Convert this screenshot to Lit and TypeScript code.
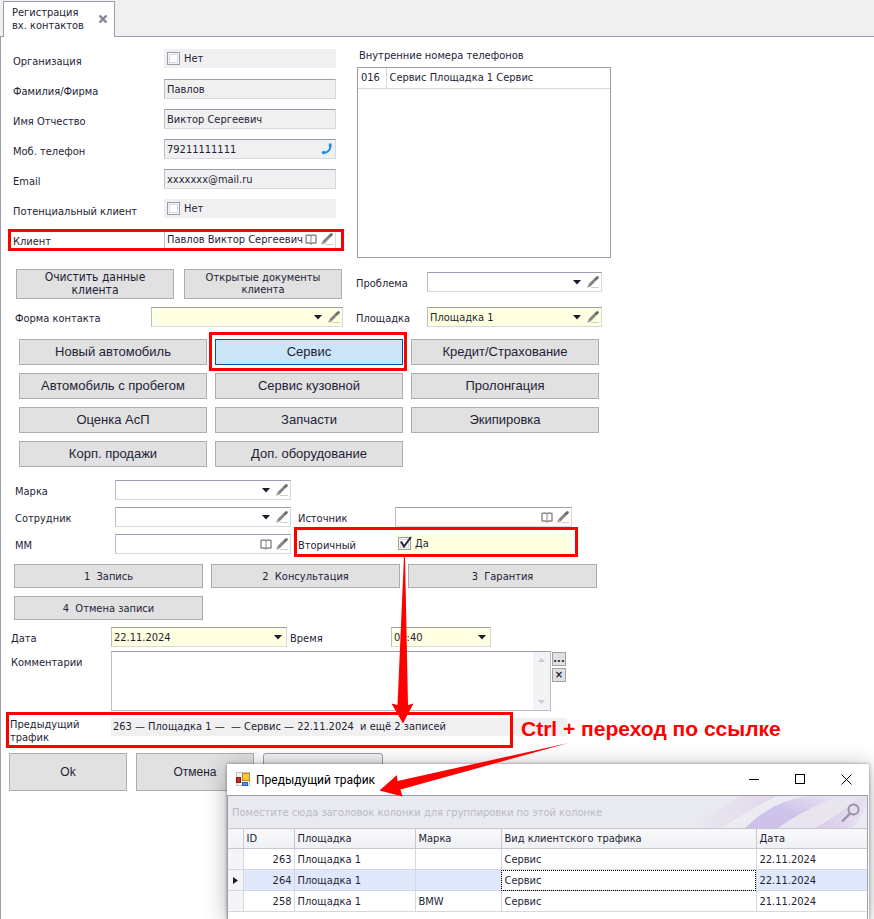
import { LitElement, html, css, svg, nothing } from "lit";
import { customElement, state } from "lit/decorators.js";
import { classMap } from "lit/directives/class-map.js";

interface TrafficRow {
  id: number;
  site: string;
  brand: string;
  kind: string;
  date: string;
}

const SERVICES = [
  "Новый автомобиль",
  "Сервис",
  "Кредит/Страхование",
  "Автомобиль с пробегом",
  "Сервис кузовной",
  "Пролонгация",
  "Оценка АсП",
  "Запчасти",
  "Экипировка",
  "Корп. продажи",
  "Доп. оборудование",
];

const ACTIONS = ["1  Запись", "2  Консультация", "3  Гарантия", "4  Отмена записи"];

const TRAFFIC: TrafficRow[] = [
  { id: 263, site: "Площадка 1", brand: "", kind: "Сервис", date: "22.11.2024" },
  { id: 264, site: "Площадка 1", brand: "", kind: "Сервис", date: "22.11.2024" },
  { id: 258, site: "Площадка 1", brand: "BMW", kind: "Сервис", date: "21.11.2024" },
];

const caret = html`<svg class="caret" width="8" height="5" viewBox="0 0 8 5" aria-hidden="true">
  <path d="M0 0H8L4 4.5Z" fill="#1a1a2e" />
</svg>`;

const pencil = html`<svg width="12" height="12" viewBox="0 0 12 12" aria-hidden="true">
  <path d="M4 11.5H12" stroke="#d0d0d0" stroke-width="1" />
  <path d="M2.4 9.4L9 2.8" stroke="#868686" stroke-width="3" />
  <path d="M9.2 2.6L10.4 1.5" stroke="#6c6c6c" stroke-width="2.8" stroke-linecap="round" />
  <path d="M0.2 11.8L1.2 8.4L3.6 10.6Z" fill="#9a9a9a" />
</svg>`;

const book = html`<svg width="12" height="11" viewBox="0 0 12 11" aria-hidden="true">
  <path
    d="M1 1.5Q4.8 0.5 6 1.8Q7.2 0.5 11 1.5V9H7.2L6 10L4.8 9H1Z"
    fill="#fff"
    stroke="#8a8a8a"
    stroke-width="1.4"
    stroke-linejoin="round"
  />
  <path d="M6 2V9" stroke="#8a8a8a" stroke-width="1" />
</svg>`;

const phone = html`<svg width="12" height="12" viewBox="0 0 12 12" aria-hidden="true">
  <path
    d="M8 0.9Q8 0.2 8.8 0.3L10.4 0.8Q11.3 4.6 8.6 7.9Q6 11 2 11.4L0.6 9.6Q0.4 9 1 8.7L3 7.8Q3.6 7.6 4 8.2L4.5 8.8Q7.6 7.4 8.6 4.3L8.1 3.9Q7.6 3.5 7.7 2.9Z"
    fill="#1490e6"
  />
</svg>`;

@customElement("app-root")
export class AppRoot extends LitElement {
  @state() private service = "Сервис";
  @state() private current = 264;

  static styles = css`
    :host {
      display: block;
      color: #1e1e36;
      font: 11px/13px "DejaVu Sans Condensed", "Noto Sans", sans-serif;
    }
    * {
      box-sizing: border-box;
    }
    button,
    input,
    select,
    textarea {
      font: inherit;
      color: inherit;
      margin: 0;
      min-width: 0;
    }
    .page {
      position: relative;
      display: flex;
      flex-direction: column;
      min-height: 100vh;
      background: #fff;
      overflow: hidden;
    }
    .tabs {
      display: flex;
      height: 37px;
      padding: 1px 0 0 3px;
      background: #f0f0f0;
      border-bottom: 1px solid #9c9dae;
    }
    .tab {
      display: flex;
      align-items: center;
      justify-content: space-between;
      width: 112px;
      height: 36px;
      padding: 0 6px 1px 8px;
      background: #fff;
      border: 1px solid #9c9dae;
      border-bottom: 0;
    }
    .tab-close {
      display: flex;
      padding: 0;
      border: 0;
      background: none;
    }
    .work {
      flex: 1;
      border-left: 1px solid #9c9dae;
    }
    .form {
      position: relative;
      max-width: 611px;
    }
    .client {
      display: grid;
      grid-template-columns: 323fr 254fr;
      gap: 21px;
      padding: 12px 1px 0 12px;
    }
    .rows {
      display: flex;
      flex-direction: column;
      gap: 10px;
    }
    .row {
      position: relative;
      display: grid;
      grid-template-columns: 100px 1fr;
      height: 20px;
    }
    .rows .row {
      grid-template-columns: 151px 1fr;
    }
    .label {
      padding-top: 5px;
      line-height: 14px;
      white-space: nowrap;
    }
    .rows .label {
      padding-top: 6px;
    }
    .box {
      display: flex;
      align-items: center;
      min-width: 0;
      height: 20px;
      background: #fff;
      border: 1px solid #d6d8e0;
      border-top-color: #9c9dae;
      border-left-color: #bcbdca;
    }
    .grey {
      background: #f0f0f0;
    }
    .yellow {
      background: #ffffe1;
    }
    .plain {
      height: 19px;
      border-color: transparent;
    }
    .box input[type="text"],
    .box select {
      flex: 1;
      width: 100%;
      height: 18px;
      padding: 0 0 0 2px;
      border: 0;
      outline: 0;
      background: transparent;
      appearance: none;
    }
    .caret {
      flex: none;
      margin-right: 4px;
    }
    .icon {
      display: flex;
      flex: none;
      align-items: center;
      justify-content: center;
      width: 16px;
      height: 16px;
      padding: 0;
      border: 0;
      background: none;
    }
    .check {
      display: flex;
      align-items: center;
      gap: 4px;
      padding-left: 2px;
    }
    .check input {
      appearance: none;
      width: 13px;
      height: 13px;
      border: 1px solid #9c9dae;
      background: #fff;
      box-shadow: inset 0 0 0 1px #f4f4f8, inset 0 0 0 2px #d8dae4;
    }
    .tick {
      position: relative;
      display: flex;
    }
    .tick svg {
      position: absolute;
      left: 1px;
      top: -1px;
      pointer-events: none;
    }
    .marked::after {
      content: "";
      position: absolute;
      border: 3px solid #f00;
      pointer-events: none;
      z-index: 2;
    }
    .mark-client::after {
      inset: 0 -8px -2px -5px;
    }
    .mark-service::after {
      inset: -7px -4px -6px -6px;
    }
    .mark-second::after {
      inset: -7px -6px -3px -4px;
    }
    .mark-traffic::after {
      inset: -6px 54px -4px -5px;
    }
    .phones {
      display: flex;
      flex-direction: column;
      gap: 5px;
    }
    .phones-title {
      padding-left: 2px;
      white-space: nowrap;
    }
    .list {
      height: 191px;
      border: 1px solid #9c9dae;
    }
    .list table {
      width: 100%;
      border-collapse: collapse;
    }
    .list td {
      height: 20px;
      padding: 0 3px;
      border-bottom: 1px solid #d6d8e0;
    }
    .list td:first-child {
      width: 28px;
      border-right: 1px solid #d6d8e0;
    }
    .btn {
      padding: 0;
      border: 1px solid #adadad;
      background: #e1e1e1;
      white-space: pre;
    }
    .contact {
      display: grid;
      grid-template-columns: 328fr 246fr;
      gap: 13px;
      padding: 11px 10px 0 14px;
    }
    .stack {
      display: flex;
      flex-direction: column;
      gap: 8px;
    }
    .stack .row {
      grid-template-columns: 136px 1fr;
    }
    .stack.side {
      gap: 15px;
      padding-top: 3px;
    }
    .stack.side .row {
      grid-template-columns: 71px 1fr;
    }
    .pair {
      display: grid;
      grid-template-columns: 1fr 1fr;
      gap: 10px;
      height: 30px;
      padding: 0 1px;
    }
    .pair .btn {
      white-space: normal;
      padding: 0 20px;
      line-height: 12px;
    }
    .pair .big {
      font-size: 12px;
      line-height: 13px;
    }
    .services {
      display: grid;
      grid-template-columns: repeat(3, 1fr);
      gap: 8px;
      padding: 12px 13px 0 18px;
    }
    .cell {
      position: relative;
      display: grid;
    }
    .services .btn {
      height: 26px;
      font: 13px/16px "Liberation Sans", sans-serif;
    }
    .services .on {
      background: #cce4f7;
      border-color: #005499;
    }
    .refs {
      display: grid;
      grid-template-columns: 276fr 274fr;
      gap: 7px;
      padding: 13px 40px 0 14px;
    }
    .refs .row {
      grid-template-columns: 97px 1fr;
    }
    .refs .left {
      grid-column: 1;
      grid-template-columns: 100px 1fr;
    }
    .actions {
      display: grid;
      grid-template-columns: repeat(3, 1fr);
      gap: 8px;
      padding: 10px 15px 0 13px;
    }
    .actions .btn {
      height: 24px;
    }
    .when {
      display: grid;
      grid-template-columns: 100px 176fr 104px 100fr;
      padding: 7px 121px 0 10px;
    }
    .when .time-label {
      padding-left: 3px;
    }
    .notes {
      display: grid;
      grid-template-columns: 100px 1fr 14px;
      column-gap: 1px;
      padding: 4px 46px 0 9px;
    }
    .notes .label {
      padding-left: 1px;
    }
    .memo {
      display: flex;
      height: 60px;
      border: 1px solid #bcbdca;
      border-top-color: #9c9dae;
    }
    .memo textarea {
      flex: 1;
      padding: 2px;
      border: 0;
      outline: 0;
      resize: none;
      background: #fff;
    }
    .scroll {
      display: flex;
      flex-direction: column;
      justify-content: space-between;
      align-items: center;
      width: 17px;
      padding: 6px 0;
      background: #f3f3f6;
    }
    .minis {
      display: flex;
      flex-direction: column;
      gap: 2px;
      padding-top: 1px;
    }
    .minis .btn {
      height: 14px;
      font-weight: bold;
      line-height: 10px;
      border-color: #a0a0a0;
    }
    .traffic {
      position: relative;
      display: grid;
      grid-template-columns: 101px 1fr;
      margin: 7px 45px 0 9px;
    }
    .traffic.mark-traffic::after {
      left: -4px;
    }
    .traffic a {
      height: 18px;
      padding-left: 2px;
      color: inherit;
      line-height: 18px;
      background: #f0f0f0;
      text-decoration: none;
      white-space: pre;
    }
    .finish {
      display: grid;
      grid-template-columns: 118fr 118fr 120fr;
      gap: 9px;
      width: 374px;
      margin: 9px 0 0 8px;
    }
    .finish .btn {
      height: 38px;
      font: 12px/14px "Liberation Sans", sans-serif;
    }
    .finish .soft {
      border: 1px solid #9c9dae;
      border-radius: 3px;
      background: linear-gradient(#f4f4f6, #d4d5da);
    }
    .arrows {
      position: absolute;
      left: 0;
      top: 0;
      z-index: 4;
      overflow: visible;
      pointer-events: none;
    }
    .hint {
      position: absolute;
      left: 521px;
      top: 717px;
      z-index: 3;
      color: #f00;
      font: bold 21px/24px "Liberation Sans", sans-serif;
      white-space: nowrap;
    }
    .window {
      position: absolute;
      left: 227px;
      right: 5px;
      top: 764px;
      bottom: 0;
      z-index: 3;
      display: flex;
      flex-direction: column;
      background: #fff;
      box-shadow: 0 0 3px rgba(0, 0, 0, 0.4), 0 3px 22px rgba(0, 0, 0, 0.3);
    }
    .titlebar {
      display: flex;
      align-items: center;
      gap: 5px;
      height: 31px;
      padding-left: 9px;
      color: #000;
      font: 12px/16px Roboto, "Noto Sans", sans-serif;
    }
    .caption {
      flex: 1;
    }
    .win-btn {
      display: flex;
      align-items: center;
      justify-content: center;
      width: 46px;
      height: 30px;
      margin-left: -5px;
      padding: 0;
      border: 0;
      background: none;
    }
    .grid {
      flex: 1;
      margin-right: 1px;
      border: 1px solid #9c9dae;
      border-bottom: 0;
    }
    .group {
      display: flex;
      align-items: center;
      justify-content: space-between;
      position: relative;
      height: 32px;
      padding: 1px 7px 0 4px;
      color: #b9bac6;
      background: #e9eaef;
    }
    .group .waves {
      position: absolute;
      right: 0;
      top: 0;
    }
    .group .find {
      position: relative;
    }
    .data {
      width: 100%;
      border-collapse: collapse;
      table-layout: fixed;
    }
    .data th,
    .data td {
      height: 21px;
      padding: 0 3px;
      text-align: left;
      font-weight: normal;
      white-space: nowrap;
      border: 1px solid #d6d8e0;
      border-left: 0;
    }
    .data th {
      height: 20px;
      background: linear-gradient(#f9f9fb, #eff0f3);
      border-color: #c6c8d2;
    }
    .data tr > :last-child {
      border-right: 0;
    }
    .data td.num {
      text-align: right;
      padding-right: 2px;
    }
    .data td:first-child {
      background: #f5f5f8;
      padding: 0 0 0 5px;
    }
    .data .sel td {
      background: #e0e9fc;
    }
    .data .sel td:first-child {
      background: #f5f5f8;
    }
    .data .sel td.focus {
      background: #fff;
      outline: 1px dotted #000;
      outline-offset: -1px;
    }
    .c0 { width: 15px; }
    .c1 { width: 51px; }
    .c2 { width: 121px; }
    .c3 { width: 86px; }
    .c5 { width: 111px; }
  `;

  private check(id: string, text: string, on = false) {
    return html`<label class="check">
      <span class="tick">
        <input type="checkbox" id=${id} ?checked=${on} />
        ${on
          ? html`<svg width="13" height="13" viewBox="0 0 13 13" aria-hidden="true">
              <path d="M2 5.5L5 10.5L12 1" fill="none" stroke="#26263a" stroke-width="2" />
            </svg>`
          : nothing}
      </span>
      ${text}
    </label>`;
  }

  private text(id: string, label: string, value: string, icons: unknown = nothing) {
    return html`<div class="row">
      <label class="label" for=${id}>${label}</label>
      <div class="box grey"><input type="text" id=${id} .value=${value} readonly />${icons}</div>
    </div>`;
  }

  private edit() {
    return html`<button class="icon" aria-label="Изменить">${pencil}</button>`;
  }

  private open() {
    return html`<button class="icon" aria-label="Открыть">${book}</button>`;
  }

  private choice(id: string, label: string, value = "", yellow = false, extra = "") {
    return html`<div class="row ${extra}">
      <label class="label" for=${id}>${label}</label>
      <div class=${classMap({ box: true, yellow })}>
        <select id=${id}><option>${value}</option></select>
        ${caret}${this.edit()}
      </div>
    </div>`;
  }

  private lookup(id: string, label: string, value = "", extra = "") {
    return html`<div class="row ${extra}">
      <label class="label" for=${id}>${label}</label>
      <div class="box"><input type="text" id=${id} .value=${value} />${this.open()}${this.edit()}</div>
    </div>`;
  }

  private flag(id: string, label: string) {
    return html`<div class="row">
      <label class="label" for=${id}>${label}</label>
      <div class="box grey plain">${this.check(id, "Нет")}</div>
    </div>`;
  }

  private popup() {
    return html`<section class="window" role="dialog" aria-label="Предыдущий трафик">
      <header class="titlebar">
        <svg width="15" height="15" viewBox="0 0 15 15" aria-hidden="true">
          <rect x="0.5" y="0.5" width="13" height="13" fill="#f4f4f4" stroke="#c4c4c4" />
          <rect x="0.5" y="5.5" width="4" height="5" fill="#c8281e" stroke="#8a1810" />
          <rect x="6.5" y="1.5" width="7" height="7" fill="#f8c83c" stroke="#c08a10" />
          <rect x="6.5" y="10.5" width="5" height="3" fill="#5a96ea" stroke="#2c5cc0" />
        </svg>
        <span class="caption">Предыдущий трафик</span>
        <button class="win-btn" aria-label="Свернуть">
          <svg width="11" height="11"><path d="M0 5.5H10" stroke="#000" /></svg>
        </button>
        <button class="win-btn" aria-label="Развернуть">
          <svg width="11" height="11"><rect x="0.5" y="0.5" width="9" height="9" fill="none" stroke="#000" /></svg>
        </button>
        <button class="win-btn" aria-label="Закрыть">
          <svg width="11" height="11"><path d="M0.5 0.5L10.5 10.5M10.5 0.5L0.5 10.5" stroke="#000" /></svg>
        </button>
      </header>
      <div class="grid">
        <div class="group">
          <svg class="waves" width="180" height="32" viewBox="0 0 180 32" aria-hidden="true">
            <defs>
              <linearGradient id="w1" x1="0" x2="1">
                <stop offset="0" stop-color="#e9eaef" />
                <stop offset="1" stop-color="#e4d6ec" />
              </linearGradient>
              <linearGradient id="w2" x1="0" y1="1" x2="1" y2="0">
                <stop offset="0" stop-color="#cdc0ea" />
                <stop offset="0.5" stop-color="#cfc3ea" />
                <stop offset="1" stop-color="#e9e6f1" />
              </linearGradient>
              <linearGradient id="w3" x1="0" x2="1">
                <stop offset="0" stop-color="#d8c8ea" />
                <stop offset="1" stop-color="#e8e2f1" />
              </linearGradient>
            </defs>
            <path d="M0 32Q32 12 54 0H92Q66 12 36 32Z" fill="url(#w1)" />
            <path d="M36 32Q66 12 92 0H122Q86 6 58 32Z" fill="#ecebf1" />
            <path d="M58 32Q86 4 122 0H152Q112 16 92 32Z" fill="url(#w2)" />
            <path d="M92 32Q112 16 152 0H172Q150 18 128 32Z" fill="#e8e5ef" />
            <path d="M128 32Q154 18 172 0H180V32Z" fill="url(#w3)" />
            <path d="M166 32Q174 22 180 8V32Z" fill="#ecebf1" />
            <path d="M36 32Q66 12 92 0" fill="none" stroke="#f3f1f6" />
          </svg>
          <span>Поместите сюда заголовок колонки для группировки по этой колонке</span>
          <svg class="find" width="19" height="20" viewBox="0 0 19 20" aria-hidden="true">
            <circle cx="12.5" cy="6.5" r="5" fill="none" stroke="#9495a5" stroke-width="2" />
            <path d="M9 10.5L1 18.5" stroke="#9495a5" stroke-width="2.4" />
          </svg>
        </div>
        <table class="data">
          <colgroup>
            <col class="c0" /><col class="c1" /><col class="c2" /><col class="c3" /><col /><col class="c5" />
          </colgroup>
          <thead>
            <tr>
              <th></th>
              <th>ID</th>
              <th>Площадка</th>
              <th>Марка</th>
              <th>Вид клиентского трафика</th>
              <th>Дата</th>
            </tr>
          </thead>
          <tbody>
            ${TRAFFIC.map((r) => {
              const sel = r.id === this.current;
              return html`<tr class=${classMap({ sel })} @click=${() => (this.current = r.id)}>
                <td>
                  ${sel
                    ? html`<svg width="5" height="7" viewBox="0 0 5 7"><path d="M0 0L5 3.5L0 7Z" fill="#1a1a2e" /></svg>`
                    : nothing}
                </td>
                <td class="num">${r.id}</td>
                <td>${r.site}</td>
                <td>${r.brand}</td>
                <td class=${classMap({ focus: sel })}>${r.kind}</td>
                <td>${r.date}</td>
              </tr>`;
            })}
          </tbody>
        </table>
      </div>
    </section>`;
  }

  render() {
    return html`<div class="page">
      <nav class="tabs">
        <div class="tab">
          <span>Регистрация<br />вх. контактов</span>
          <button class="tab-close" aria-label="Закрыть вкладку">
            <svg width="10" height="8" viewBox="0 0 10 8">
              <path d="M1.5 0.5L8.5 7.5M8.5 0.5L1.5 7.5" stroke="#858694" stroke-width="2.4" />
            </svg>
          </button>
        </div>
      </nav>

      <main class="work">
        <div class="form">
          <section class="client">
            <div class="rows">
              ${this.flag("org", "Организация")} ${this.text("surname", "Фамилия/Фирма", "Павлов")}
              ${this.text("name", "Имя Отчество", "Виктор Сергеевич")}
              ${this.text(
                "phone",
                "Моб. телефон",
                "79211111111",
                html`<button class="icon" aria-label="Позвонить">${phone}</button>`
              )}
              ${this.text("email", "Email", "xxxxxxx@mail.ru")} ${this.flag("lead", "Потенциальный клиент")}
              ${this.lookup("client", "Клиент", "Павлов Виктор Сергеевич", "marked mark-client")}
            </div>
            <div class="phones">
              <span class="phones-title">Внутренние номера телефонов</span>
              <div class="list">
                <table>
                  <tr>
                    <td>016</td>
                    <td>Сервис Площадка 1 Сервис</td>
                  </tr>
                </table>
              </div>
            </div>
          </section>

          <section class="contact">
            <div class="stack">
              <div class="pair">
                <button class="btn big">Очистить данные клиента</button>
                <button class="btn">Открытые документы клиента</button>
              </div>
              ${this.choice("form", "Форма контакта", "", true)}
            </div>
            <div class="stack side">
              ${this.choice("problem", "Проблема")} ${this.choice("site", "Площадка", "Площадка 1", true)}
            </div>
          </section>

          <section class="services">
            ${SERVICES.map((s) => {
              const on = s === this.service;
              return html`<div class=${classMap({ cell: true, marked: on, "mark-service": on })}>
                <button class=${classMap({ btn: true, on })} @click=${() => (this.service = s)}>${s}</button>
              </div>`;
            })}
          </section>

          <section class="refs">
            ${this.choice("brand", "Марка", "", false, "left")} ${this.choice("staff", "Сотрудник", "", false, "left")}
            ${this.lookup("source", "Источник")} ${this.lookup("mm", "ММ", "", "left")}
            <div class="row marked mark-second">
              <label class="label" for="second">Вторичный</label>
              <div class="box yellow plain">${this.check("second", "Да", true)}</div>
            </div>
          </section>

          <section class="actions">${ACTIONS.map((a) => html`<button class="btn">${a}</button>`)}</section>

          <section class="when">
            <label class="label" for="date">Дата</label>
            <div class="box yellow">
              <select id="date"><option>22.11.2024</option></select>${caret}
            </div>
            <label class="label time-label" for="time">Время</label>
            <div class="box yellow">
              <select id="time"><option>09:40</option></select>${caret}
            </div>
          </section>

          <section class="notes">
            <label class="label" for="notes">Комментарии</label>
            <div class="memo">
              <textarea id="notes"></textarea>
              <div class="scroll">
                <svg width="7" height="4"><path d="M0 4H7L3.5 0Z" fill="#c8c9d2" /></svg>
                <svg width="7" height="4"><path d="M0 0H7L3.5 4Z" fill="#c8c9d2" /></svg>
              </div>
            </div>
            <div class="minis">
              <button class="btn">...</button>
              <button class="btn">×</button>
            </div>
          </section>

          <section class="traffic marked mark-traffic">
            <span>Предыдущий<br />трафик</span>
            <a href="#traffic">263 — Площадка 1 —  — Сервис — 22.11.2024  и ещё 2 записей</a>
          </section>

          <section class="finish">
            <button class="btn">Ok</button>
            <button class="btn">Отмена</button>
            <button class="btn soft" aria-label="Дополнительно"></button>
          </section>
        </div>
      </main>

      ${this.popup()}
      <div class="hint">Ctrl + переход по ссылке</div>
      <svg class="arrows" width="874" height="919" viewBox="0 0 874 919" aria-hidden="true">
        ${svg`<path d="M404 556H405L408 705L413.5 703.5L403 723.5L391.5 703.5L397.5 705Z" fill="#f00" />
        <path d="M568.5 743L397.5 781L397 775L379.5 790.5L402.5 796.5L400.5 789.5Z" fill="#f00" />`}
      </svg>
    </div>`;
  }
}
